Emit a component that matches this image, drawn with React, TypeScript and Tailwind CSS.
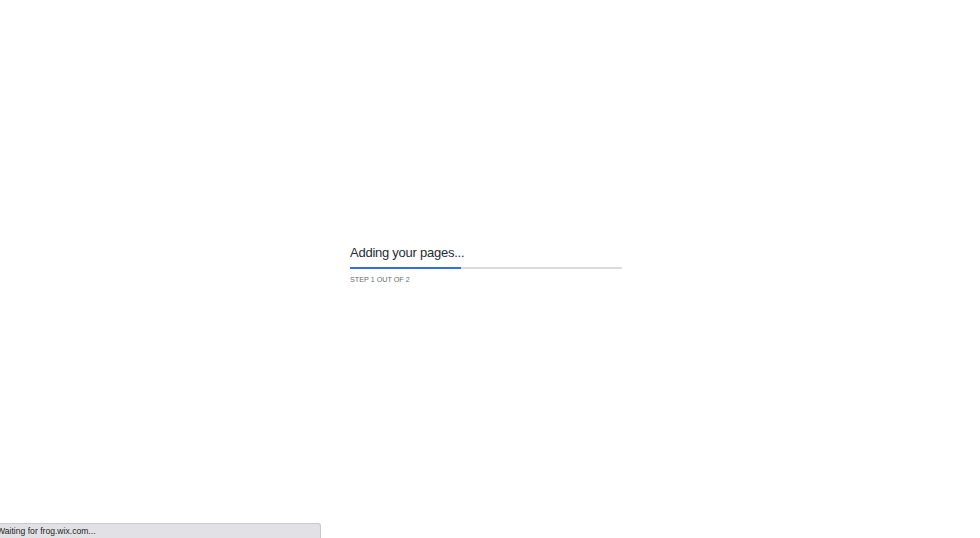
import React from "react";

export default function App() {
  return (
    <div
      className="relative w-full h-[538px] bg-white overflow-hidden"
      style={{ fontFamily: '"Liberation Sans", Arial, sans-serif' }}
    >
      <div className="flex h-full items-center justify-center pr-[8px] pb-[10px]">
        <div className="w-[272px] flex flex-col">
          <div className="pt-[1px] text-[13px] leading-[16px] tracking-[-0.25px] text-[#252c35]">
            Adding your pages...
          </div>
          <div className="mt-[6px] h-[2px] w-full bg-[#dcdcdc]">
            <div className="h-full w-[111px] bg-[#2f6ef0]" />
          </div>
          <div className="mt-[6px] text-[7.2px] leading-[9px] text-[#6b6b6b] uppercase">
            Step 1 out of 2
          </div>
        </div>
      </div>
      <div className="absolute left-0 bottom-0 h-[15px] w-[321px] bg-[#e2e2e6] border-t border-r border-[#c9c9cc] rounded-tr-[3px] flex items-center overflow-hidden">
        <span className="ml-[-3px] text-[8.6px] leading-[11px] text-[#222] whitespace-nowrap">
          Waiting for frog.wix.com...
        </span>
      </div>
    </div>
  );
}
